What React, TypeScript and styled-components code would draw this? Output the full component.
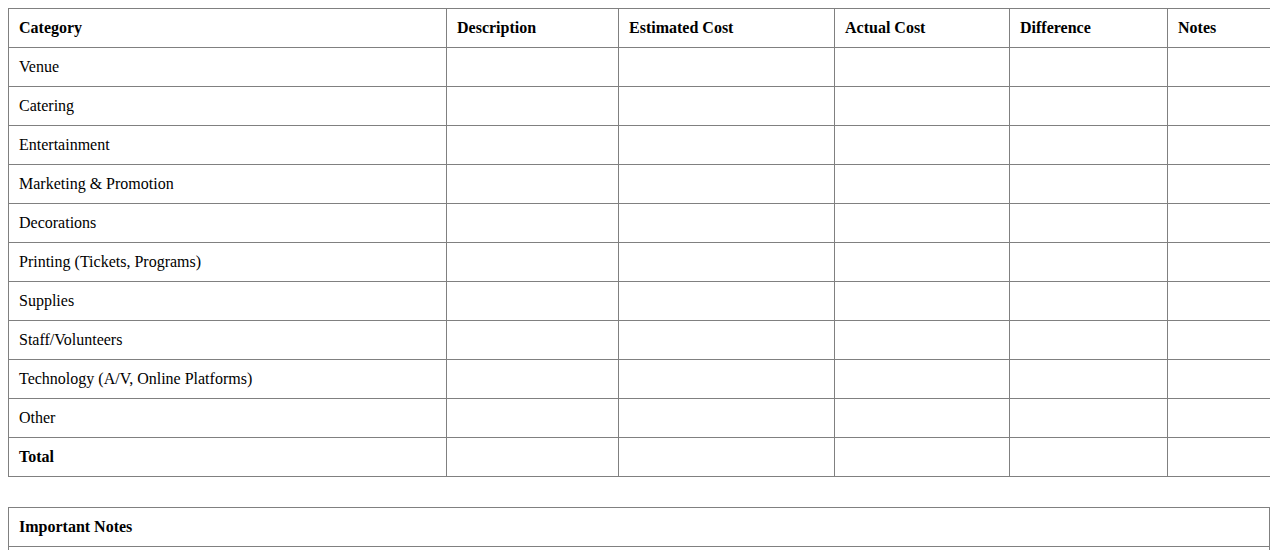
import React from "react";
import styled, { createGlobalStyle } from "styled-components";

const GlobalStyle = createGlobalStyle`
  body {
    margin: 8px;
    background: #ffffff;
    font-family: "Liberation Serif", "Times New Roman", serif;
    font-size: 16px;
    color: #000000;
  }
`;

const columns = [
  { label: "Category", width: 438 },
  { label: "Description", width: 172 },
  { label: "Estimated Cost", width: 216 },
  { label: "Actual Cost", width: 175 },
  { label: "Difference", width: 158 },
  { label: "Notes", width: 103 },
];

const categories = [
  "Venue",
  "Catering",
  "Entertainment",
  "Marketing & Promotion",
  "Decorations",
  "Printing (Tickets, Programs)",
  "Supplies",
  "Staff/Volunteers",
  "Technology (A/V, Online Platforms)",
  "Other",
];

const App = () => {
  return (
    <>
      <GlobalStyle />
      <Page>
        <Table>
          <colgroup>
            {columns.map((c) => (
              <Col key={c.label} $width={c.width} />
            ))}
          </colgroup>
          <thead>
            <tr>
              {columns.map((c) => (
                <HeadCell key={c.label}>{c.label}</HeadCell>
              ))}
            </tr>
          </thead>
          <tbody>
            {categories.map((name) => (
              <tr key={name}>
                <Cell>{name}</Cell>
                {columns.slice(1).map((c) => (
                  <Cell key={c.label} />
                ))}
              </tr>
            ))}
            <tr>
              <Cell $bold>Total</Cell>
              {columns.slice(1).map((c) => (
                <Cell key={c.label} />
              ))}
            </tr>
          </tbody>
        </Table>

        <NotesTable>
          <thead>
            <tr>
              <HeadCell>Important Notes</HeadCell>
            </tr>
          </thead>
          <tbody>
            <tr>
              <Cell>&nbsp;</Cell>
            </tr>
          </tbody>
        </NotesTable>
      </Page>
    </>
  );
};

export default App;

const Page = styled.div`
  display: flex;
  flex-direction: column;
  width: 1262px;
`;

const Table = styled.table`
  width: 100%;
  border-collapse: collapse;
  table-layout: fixed;
`;

const NotesTable = styled(Table)`
  margin-top: 30px;
`;

const Col = styled.col<{ $width: number }>`
  width: ${(p) => p.$width}px;
`;

const HeadCell = styled.th`
  border: 1px solid #808080;
  padding: 10px;
  text-align: left;
  font-weight: bold;
  line-height: 18px;
`;

const Cell = styled.td<{ $bold?: boolean }>`
  border: 1px solid #808080;
  padding: 10px;
  text-align: left;
  font-weight: ${(p) => (p.$bold ? "bold" : "normal")};
  line-height: 18px;
`;
